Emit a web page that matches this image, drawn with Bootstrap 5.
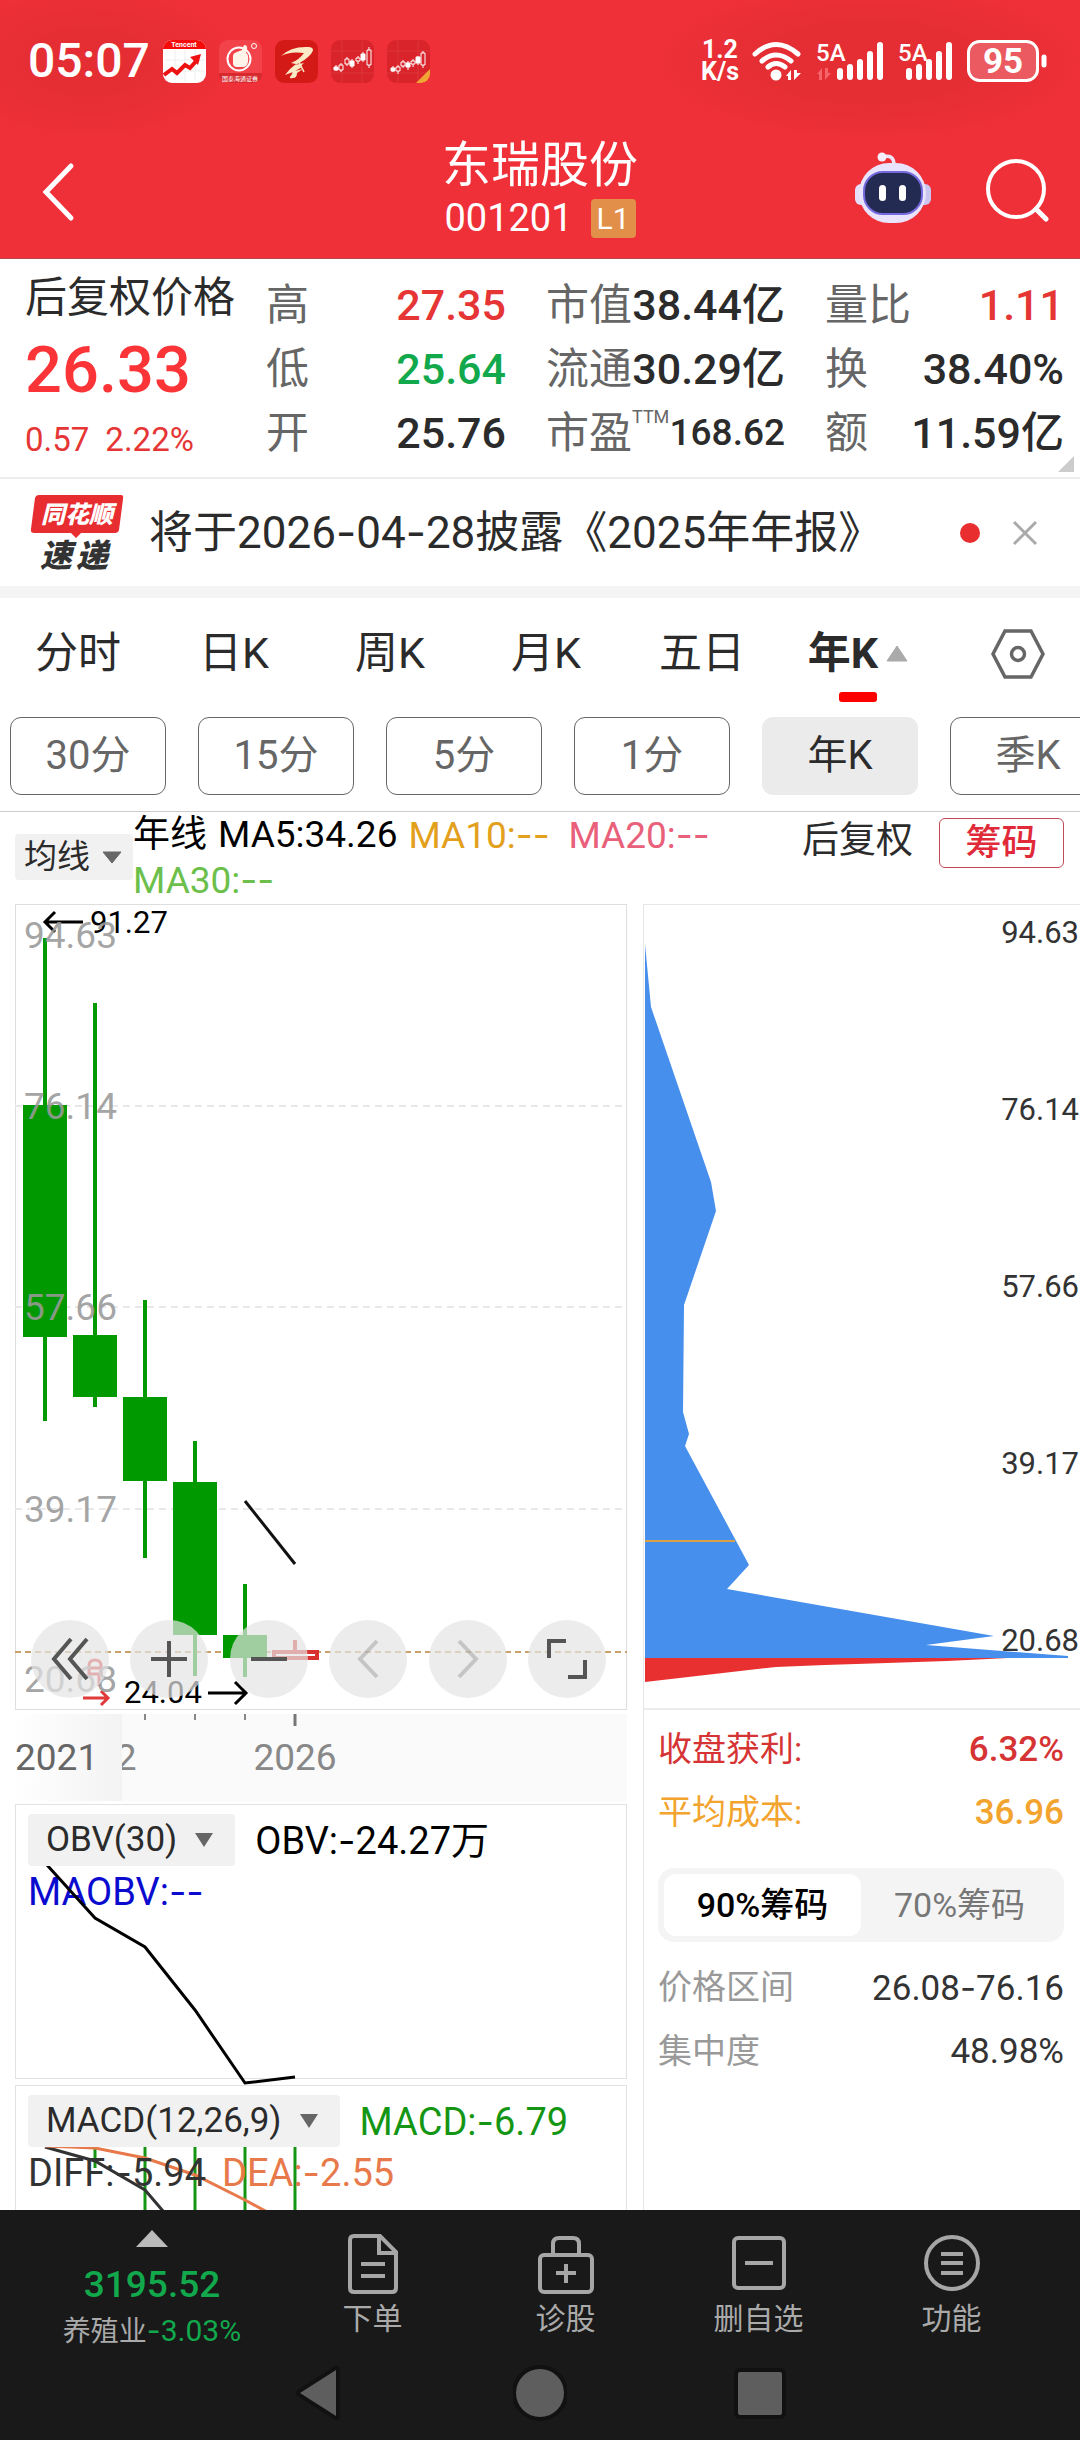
<!DOCTYPE html>
<html lang="zh-CN">
<head>
<meta charset="utf-8">
<meta name="viewport" content="width=device-width, initial-scale=1">
<title>东瑞股份 001201</title>
<link href="https://cdn.jsdelivr.net/npm/bootstrap@5.3.0/dist/css/bootstrap.min.css" rel="stylesheet">
<style>
body{font-family:Roboto,"Noto Sans CJK SC",sans-serif;color:#2b2b2b;background:#fff;line-height:1.2}
button{font-family:inherit;padding:0;border:0;background:none;color:inherit;line-height:1.2}
svg{display:block;flex:none}
svg text{font-family:Roboto,"Noto Sans CJK SC",sans-serif}
.dash{font-family:Inter,sans-serif}
.up{color:#e63535}.down{color:#12a84c}
/* top */
.topbar{background:radial-gradient(ellipse 150px 80px at 90px 62px,#e52e34 40%,transparent),radial-gradient(ellipse 220px 80px at 870px 62px,#e52e34 50%,transparent),#ef3038;color:#fff;height:259px;border-bottom:1px solid #b9484c}
.status{height:122px;padding:0 33px 0 28px}
.clock{font-size:48px;font-weight:500}
.appicons{gap:13px;margin-left:13px}
.speed{font-size:25px;line-height:22px;font-weight:700}
.netset{gap:14px;margin-left:13px}
.head{height:136px;display:grid;grid-template-columns:1fr auto 1fr;padding:0 31px}
.head .back{padding:4px 0 0 11px}
.titles{padding-top:14px}
.stockname{font-size:49px;line-height:60px}
.code{font-size:38px;line-height:44px}
.lv{background:#e28f4a;font-size:30px;line-height:39px;width:45px;border-radius:4px;margin-left:18px}
.acts{gap:54px}
/* quote */
.quote{height:220px;border-bottom:2px solid #ececec;padding:0 16px 0 25px;position:relative}
.quote .g1{width:241px;padding-top:15px}
.pname{font-size:42px;line-height:48px}
.price{font-size:65px;line-height:96px;font-weight:500;color:#fa3437}
.chg{font-size:33px;line-height:44px;gap:16px}
.gcol{padding-top:14px;font-size:43px;font-weight:500;line-height:64px;white-space:nowrap}
.gcol .lbl{color:#666;font-weight:400}
.gcol sup{font-size:18px;top:-25px}
.c2{width:240px}.c3{width:239px}.c4{width:239px}
.gsm{font-size:37px}
.corner{position:absolute;right:6px;bottom:5px}
/* news */
.news{height:107px;font-size:44px;padding:0 42px 0 31px}
.news a{margin-left:25px}
.news button{margin-left:32px}
.strip{height:12px;background:#f4f4f4}
/* tabs */
.tabs{display:grid;grid-template-columns:repeat(6,13fr) 12fr;height:111px}
.tabs button{font-size:43px;position:relative}
.tabs .gear{padding-left:20px}
.tabs .on{font-weight:700}
.tabs .on::after{content:"";position:absolute;left:50%;bottom:7px;width:38px;height:10px;margin-left:-19px;border-radius:3px;background:#fd0000}
.pills{gap:32px;padding:8px 0 16px 10px;overflow:hidden;border-bottom:1px solid #ccc}
.pills button{flex:0 0 156px;height:78px;border:1px solid #666;border-radius:11px;font-size:40px;color:#666}
.pills .on{background:#ebebeb;border-color:#ebebeb;color:#2b2b2b}
.ind{height:92px;padding:1px 16px 0 15px}
.drop{background:#f1f1f1;border-radius:4px;color:#2b2b2b;display:flex;align-items:center}
.ind .drop{height:46px;width:118px;font-size:33px;gap:12px;padding-left:9px;margin-top:21px}
.ma{font-size:37px;line-height:44px;width:610px;column-gap:11px}
.ma span.m{min-width:149px}
.fq{font-size:37px;line-height:44px;margin-top:6px}
.chip{font-size:36px;color:#e02a3a;font-weight:500;border:1px solid #c04a55;border-radius:6px;width:125px;height:50px;margin:5px 0 0 26px;line-height:40px}
/* charts */
.charts{display:grid;grid-template-columns:612fr 437fr;column-gap:16px;padding-left:15px;align-items:start}
.tools{position:absolute;left:16px;bottom:12px;right:21px;display:flex;justify-content:space-between}
.tools button{width:78px;height:78px;border-radius:50%;background:rgba(228,228,228,.7);display:flex;align-items:center;justify-content:center}
.tools button:disabled svg{opacity:.25}
.axis{margin:4px 0 3px}
.sub{border:1px solid #e2e2e2;position:relative;height:275px;margin-bottom:6px;padding:9px 12px;font-size:38px;line-height:50px}
.sub .plot{position:absolute;left:-1px;top:0;width:calc(100% + 2px);overflow:visible}
.sub .drop{position:relative;height:52px;font-size:35px;padding:0 21px 0 18px;gap:17px}
.chipcol{border-left:1px solid #e6e6e6;min-height:1310px}
.chipinfo{padding:8px 16px 0 14px;font-size:34px;line-height:63px}
.chipinfo b{font-weight:500;font-size:35px}
.chipinfo .v{font-size:35px;color:#333}
.seg{background:#f4f4f4;border-radius:16px;height:74px;padding:6px;margin:24px 0 14px}
.seg button{flex:1;border-radius:12px;color:#777;font-size:34px}
.seg .on{background:#fff;color:#000;font-weight:500}
/* bottom */
.foot{background:#191919;height:230px;color:#aaa}
.menu{display:grid;grid-template-columns:248fr repeat(4,193fr);padding:20px 32px 0 28px;height:152px}
.menu button{display:flex;flex-direction:column;align-items:center;font-size:30px;line-height:36px}
.menu .idx{font-size:37px;line-height:44px;font-weight:500;color:#12a84c;margin-top:16px}
.menu .sec{font-size:28px;line-height:34px;margin-top:6px}
.menu .sec .down{font-size:30px}
.menu .cap{margin-top:3px}
.nav3{gap:166px;height:62px}
</style>
</head>
<body>
<div class="d-flex flex-column vh-100 overflow-hidden">
<header class="topbar flex-shrink-0">
 <div class="status d-flex align-items-center">
  <span class="clock">05:07</span>
  <div class="appicons d-flex">
   <svg width="43" height="43" viewBox="0 0 43 43"><rect width="43" height="43" rx="9" fill="#fff"/><path d="M0 9a9 9 0 0 1 9-9h25a9 9 0 0 1 9 9z" fill="#f60a0a"/><path d="M12 10v30M22 10v32M32 10v30M2 20h40M2 31h40" stroke="#eee"/><text x="21" y="7" font-size="7" fill="#fff" text-anchor="middle" font-weight="700">Tencent</text><path d="M1 35l8-6 5 4 8-8 5 3 8-9" fill="none" stroke="#e11" stroke-width="4"/><path d="M27 17l11-3-3 11z" fill="#e11"/></svg>
   <svg width="43" height="43" viewBox="0 0 43 43"><rect width="43" height="43" rx="9" fill="#f2434a"/><path d="M0 33h43a9 9 0 0 1-9 10H9a9 9 0 0 1-9-10z" fill="#d62a2e"/><circle cx="20" cy="19" r="11.500" fill="none" stroke="#fff" stroke-width="2"/><path d="M14 16q0-3 4-4l5-2 2-5q4 0 3 5l-1 3q3 1 2 9-1 5-5 5h-6q-4 0-4-4z" fill="#fff4ea"/><circle cx="35" cy="6" r="2.500" fill="none" stroke="#fff"/><text x="21" y="41" font-size="6" fill="#fff" text-anchor="middle">国泰海通证券</text></svg>
   <svg width="43" height="43" viewBox="0 0 43 43"><rect width="43" height="43" rx="9" fill="#d41a17"/><path d="M6 16q10-10 28-9 7 1 2 7-6 7-16 11l9-2-9 8 8-2-6 4q0 5-4 5-4 1-3-1 1-1 3-5l-8 3q4-6 11-11l-5-1q8-3 13-10-14-2-23 3z" fill="#fbeac6"/><path d="M17 32l10-6M24 22l5 10" stroke="#fbeac6" stroke-width="1.500"/></svg>
   <svg width="43" height="43" viewBox="0 0 43 43"><rect width="43" height="43" rx="9" fill="#d8242a"/><path d="M11 0v43M31 0v43M0 11h43M0 33h43" stroke="#dc3538"/><g stroke="#fff" fill="#fff"><path d="M5 25v6M10 23v9M16 17v9M21 19v9M27 16v8M32 12v10M38 7v21"/><path d="M3 27h4v3H3zM19 21h4v5h-4zM30 14h4v6h-4z"/><path d="M8 25h4v5H8zM14 19h4v5h-4zM25 18h4v3h-4zM36 10h4v15h-4z" fill="#d8242a"/></g></svg>
   <svg width="43" height="43" viewBox="0 0 43 43"><rect width="43" height="43" rx="9" fill="#d8242a"/><path d="M11 0v43M31 0v43M0 11h43M0 33h43" stroke="#dc3538"/><g stroke="#fff" fill="#fff"><path d="M6 26v6M11 25v9M16 20v8M21 21v9M26 19v8M31 16v9M36 11v17"/><path d="M4 28h4v3H4zM19 23h4v4h-4zM29 17h4v6h-4z"/><path d="M9 27h4v4H9zM14 22h4v4h-4zM24 21h4v3h-4zM34 13h4v12h-4z" fill="#d8242a"/></g><path d="M29 43l14-14v5a9 9 0 0 1-9 9z" fill="#f1a534"/></svg>
  </div>
  <div class="speed ms-auto text-center">1.2<br>K/s</div>
  <div class="netset d-flex">
  <svg width="50" height="42" viewBox="0 0 50 42"><g fill="none" stroke="#fff" stroke-width="5" stroke-linecap="round"><path d="M3 14q21-19 43 0M10 21q14-12 29 0M16 27q8-7 17 0"/></g><circle cx="24" cy="35" r="5.500" fill="#fff"/><path d="M34 36l5-6v10h-3v-4zM42 30v10l7-7h-4v-3z" fill="#fff"/></svg>
  <svg width="68" height="42" viewBox="0 0 68 42"><text x="0" y="21" font-size="24" font-weight="500" fill="#fff">5A</text><path d="M1 34l5-6v12H3v-6zM9 28v12l6-7h-3v-5z" fill="#f4656b"/><g stroke="#fff" stroke-width="6" stroke-linecap="round"><path d="M24 31v6M34 27v10M44 22v15M54 14v23M64 5v32"/></g></svg>
  <svg width="55" height="42" viewBox="0 0 55 42"><text x="0" y="21" font-size="24" font-weight="500" fill="#fff">5A</text><g stroke="#fff" stroke-width="6" stroke-linecap="round"><path d="M11 31v6M21 27v10M31 22v15M41 14v23M51 5v32"/></g></svg>
  <svg width="80" height="42" viewBox="0 0 80 42"><rect x="1.500" y="1.500" width="69" height="39" rx="11" fill="#ea5a60" stroke="#fff" stroke-width="3"/><path d="M77 17v8" stroke="#fff" stroke-width="5" stroke-linecap="round"/><text x="36" y="33" font-size="35" font-weight="700" fill="#fff" text-anchor="middle">95</text></svg>
  </div>
 </div>
 <div class="head">
  <button class="back text-start" aria-label="返回"><svg width="34" height="60" viewBox="0 0 34 60"><path d="M29 4L4 30l25 26" fill="none" stroke="#fff" stroke-width="5" stroke-linecap="round"/></svg></button>
  <div class="titles text-center"><div class="stockname">东瑞股份</div><div class="code d-flex align-items-center justify-content-center">001201<span class="lv">L1</span></div></div>
  <div class="acts d-flex align-items-center justify-content-end">
   <button aria-label="智能助手"><svg width="76" height="76" viewBox="0 0 76 76"><path d="M28 5q11-3 11 8" fill="none" stroke="#efe6f7" stroke-width="3.500"/><circle cx="27" cy="5" r="4.500" fill="#f6eefa"/><rect x="0" y="32" width="14" height="21" rx="6" fill="#e4defa"/><rect x="62" y="32" width="14" height="21" rx="6" fill="#c9c5ef"/><rect x="4" y="11" width="67" height="60" rx="30" fill="#e9e4fb"/><rect x="9" y="20" width="58" height="42" rx="19" fill="#232b52" stroke="#7468dd" stroke-width="2"/><rect x="24" y="33" width="7" height="16" rx="3.500" fill="#fff"/><rect x="44" y="33" width="7" height="16" rx="3.500" fill="#fff"/></svg></button>
   <button aria-label="搜索"><svg width="64" height="64" viewBox="0 0 64 64"><circle cx="31" cy="31" r="28" fill="none" stroke="#fff" stroke-width="4"/><path d="M51 51l10 10" stroke="#fff" stroke-width="5" stroke-linecap="round"/></svg></button>
  </div>
 </div>
</header>

<section class="quote d-flex flex-shrink-0">
 <div class="g1 text-nowrap"><div class="pname">后复权价格</div><div class="price">26.33</div><div class="chg up d-flex"><span>0.57</span><span>2.22%</span></div></div>
 <div class="gcol c2">
  <div class="d-flex justify-content-between"><span class="lbl">高</span><span class="up">27.35</span></div>
  <div class="d-flex justify-content-between"><span class="lbl">低</span><span class="down">25.64</span></div>
  <div class="d-flex justify-content-between"><span class="lbl">开</span><span>25.76</span></div>
 </div>
 <div class="gcol c3 ms-auto">
  <div class="d-flex justify-content-between"><span class="lbl">市值</span><span>38.44亿</span></div>
  <div class="d-flex justify-content-between"><span class="lbl">流通</span><span>30.29亿</span></div>
  <div class="d-flex justify-content-between"><span class="lbl">市盈<sup>TTM</sup></span><span class="gsm">168.62</span></div>
 </div>
 <div class="gcol c4 ms-auto">
  <div class="d-flex justify-content-between"><span class="lbl">量比</span><span class="up">1.11</span></div>
  <div class="d-flex justify-content-between"><span class="lbl">换</span><span>38.40%</span></div>
  <div class="d-flex justify-content-between"><span class="lbl">额</span><span>11.59亿</span></div>
 </div>
 <svg class="corner" width="16" height="16" viewBox="0 0 16 16"><path d="M16 0v16H0z" fill="#ccc"/></svg>
</section>

<section class="news d-flex align-items-center flex-shrink-0 text-nowrap">
 <svg width="93" height="76" viewBox="0 0 93 76"><path d="M8 0h82q3 0 2 4l-4 31q-1 3-4 3H50l-5 5-5-5H3q-4 0-3-4L4 3q1-3 4-3z" fill="#e72d2f"/><text x="10" y="28" font-size="24" font-weight="900" font-style="italic" fill="#fff">同花顺</text><text x="9 45" y="72" font-size="32" font-weight="900" font-style="italic" fill="#333">速递</text></svg>
 <a href="#" class="text-reset text-decoration-none">将于2026<span class="dash">-</span>04<span class="dash">-</span>28披露《2025年年报》</a>
 <svg class="ms-auto" width="20" height="20"><circle cx="10" cy="10" r="10" fill="#e82e2e"/></svg>
 <button aria-label="关闭"><svg width="26" height="26" viewBox="0 0 26 26"><path d="M2 2l22 22M24 2L2 24" stroke="#aaa" stroke-width="3"/></svg></button>
</section>
<div class="strip flex-shrink-0"></div>

<nav class="tabs flex-shrink-0">
 <button>分时</button><button>日K</button><button>周K</button><button>月K</button><button>五日</button>
 <button class="on d-flex align-items-center justify-content-center gap-2">年K<svg width="22" height="17" viewBox="0 0 22 17"><path d="M11 1L21 16H1z" fill="#aaa" stroke="#aaa" stroke-linejoin="round"/></svg></button>
 <button class="gear d-flex align-items-center justify-content-center" aria-label="设置"><svg width="54" height="50" viewBox="0 0 54 50"><path d="M14 2h26l12 23-12 23H14L2 25z" fill="none" stroke="#666" stroke-width="3.500"/><circle cx="27" cy="25" r="6.500" fill="none" stroke="#666" stroke-width="3.500"/></svg></button>
</nav>
<div class="pills d-flex flex-shrink-0">
 <button>30分</button><button>15分</button><button>5分</button><button>1分</button><button class="on">年K</button><button>季K</button>
</div>

<main class="flex-fill overflow-hidden" style="min-height:0">
 <div class="ind d-flex align-items-start text-nowrap">
  <button class="drop">均线<svg width="20" height="13" viewBox="0 0 20 13"><path d="M1 1h18l-9 11z" fill="#666" stroke="#666" stroke-linejoin="round"/></svg></button>
  <div class="ma d-flex flex-wrap text-black"><span>年线</span><span>MA5:34.26</span><span class="m" style="color:#e3a01c">MA10:<span class="dash">--</span></span><span class="m" style="color:#e9607a">MA20:<span class="dash">--</span></span><span class="m" style="color:#6cbf4b">MA30:<span class="dash">--</span></span></div>
  <span class="fq ms-auto">后复权</span>
  <button class="chip">筹码</button>
 </div>
 <div class="charts">
  <div>
   <div class="position-relative">
    <svg class="w-100 h-auto" viewBox="0 0 612 806">
     <rect x=".5" y=".5" width="611" height="805" fill="none" stroke="#dedede"/>
     <path d="M0 202H612M0 403H612M0 605H612" stroke="#e8e8e8" stroke-width="2" stroke-dasharray="7 5"/>
     <path d="M0 748H612" stroke="#c9a06a" stroke-width="2" stroke-dasharray="6 4"/>
     <g stroke="#009a00" stroke-width="4"><path d="M30 34V517M80 99V503M130 396V654M180 537V772M230 680V773"/></g>
     <g fill="#009a00"><path d="M8 201h44v232H8zM58 431h44v62H58zM108 493h44v84h-44zM158 578h44v153h-44zM208 731h44v23h-44z"/></g>
     <path d="M280 736v10" stroke="#d93030" stroke-width="4"/><rect x="259" y="748" width="43" height="6" fill="#fff" stroke="#d93030" stroke-width="4"/>
     <path d="M230 597L280 660" stroke="#111" stroke-width="3"/>
     <g fill="none" stroke="#000" stroke-width="3"><path d="M68 18H30M40 8L30 18l10 10M193 789h37M220 778l11 11-11 11"/></g>
     <g font-size="31"><text x="75" y="29">91.27</text><text x="109" y="799">24.04</text></g>
     <g fill="none" stroke="#e03a3a" stroke-width="3"><path d="M68 794h24M86 787l7 7-7 7M84 770v12M74 762q0-6 6-6t6 6v8H74zM74 764h12"/></g>
     <g font-size="37" fill="#999" fill-opacity=".9"><text x="9" y="44">94.63</text><text x="9" y="215">76.14</text><text x="9" y="416">57.66</text><text x="9" y="618">39.17</text><text x="9" y="788">20.68</text></g>
    </svg>
    <div class="tools">
     <button aria-label="最早"><svg width="40" height="46" viewBox="0 0 40 46" fill="none" stroke="#555" stroke-width="4"><path d="M21 3L4 23l17 20M37 3L20 23l17 20"/></svg></button>
     <button aria-label="放大"><svg width="38" height="38" viewBox="0 0 38 38" stroke="#555" stroke-width="4"><path d="M19 1v36M1 19h36"/></svg></button>
     <button aria-label="缩小"><svg width="38" height="38" viewBox="0 0 38 38" stroke="#555" stroke-width="4"><path d="M1 19h36"/></svg></button>
     <button disabled aria-label="左移"><svg width="24" height="42" viewBox="0 0 24 42" fill="none" stroke="#555" stroke-width="4"><path d="M21 3L4 21l17 18"/></svg></button>
     <button disabled aria-label="右移"><svg width="24" height="42" viewBox="0 0 24 42" fill="none" stroke="#555" stroke-width="4"><path d="M3 3l17 18L3 39"/></svg></button>
     <button aria-label="全屏"><svg width="42" height="42" viewBox="0 0 42 42" fill="none" stroke="#555" stroke-width="4"><path d="M3 20V3h17M22 39h17V22"/></svg></button>
    </div>
   </div>
   <svg class="axis w-100 h-auto" viewBox="0 0 612 87">
    <defs><linearGradient id="fade"><stop offset="0" stop-color="#fff"/><stop offset="1" stop-color="#f3f3f3"/></linearGradient></defs>
    <path d="M0 0h612v87H0z" fill="#fafafa"/><path d="M130 0v6M180 0v6M230 0v6" stroke="#888" stroke-width="2"/><path d="M280 0v12" stroke="#777" stroke-width="3"/>
    <g font-size="37" fill="#888"><text x="80" y="56" text-anchor="middle">2022</text><text x="280" y="56" text-anchor="middle">2026</text></g>
    <path d="M0 0h107v87H0z" fill="url(#fade)"/><text x="0" y="56" font-size="37" fill="#666">2021</text>
   </svg>
   <div class="sub text-nowrap">
    <svg class="plot" viewBox="0 0 612 275"><path d="M32 60L80 113l50 29 50 63 50 73 50-6" fill="none" stroke="#000" stroke-width="3"/></svg>
    <div class="d-flex align-items-center text-black"><button class="drop">OBV(30)<svg width="20" height="16" viewBox="0 0 20 16"><path d="M1 1h18l-9 14z" fill="#666"/></svg></button><span class="ms-3 ps-1">OBV:<span class="dash">-</span>24.27万</span></div>
    <div style="color:#0b0bd0">MAOBV:<span class="dash">--</span></div>
   </div>
   <div class="sub text-nowrap">
    <svg class="plot" viewBox="0 0 612 275" fill="none"><path d="M80 60v22M130 60v215M180 60v215M230 60v215M280 60v215" stroke="#149614" stroke-width="3"/><path d="M30 61l50 14 50 29 18 21 32 60" stroke="#333" stroke-width="3"/><path d="M30 60l50 2 50 10 50 17 50 25 50 27" stroke="#e8794a" stroke-width="3"/></svg>
    <div class="d-flex align-items-center"><button class="drop">MACD(12,26,9)<svg width="20" height="16" viewBox="0 0 20 16"><path d="M1 1h18l-9 14z" fill="#666"/></svg></button><span class="ms-3 ps-1" style="color:#149614">MACD:<span class="dash">-</span>6.79</span></div>
    <div class="d-flex gap-3 position-relative"><span style="color:#333">DIFF:<span class="dash">-</span>5.94</span><span style="color:#e8794a">DEA:<span class="dash">-</span>2.55</span></div>
   </div>
  </div>
  <div class="chipcol">
   <svg class="w-100 h-auto" viewBox="0 0 436 806">
    <path d="M0 .5H436" stroke="#e6e6e6"/><path d="M0 805H436" stroke="#ececec" stroke-width="2"/>
    <path d="M1 40L7 103 67 278l5 29-32 94-1 107 6 22-4 12 64 119-22 24 267 47-68 9 142 11v2H1z" fill="#468fec"/>
    <path d="M1 637H91" stroke="#d9a04a" stroke-width="2"/>
    <path d="M1 754H364l-61 3-60 2-62 2-49 2L1 778z" fill="#e83030"/>
    <g font-size="31" fill="#333" text-anchor="end"><text x="435" y="39">94.63</text><text x="435" y="216">76.14</text><text x="435" y="393">57.66</text><text x="435" y="570">39.17</text><text x="435" y="747">20.68</text></g>
   </svg>
   <div class="chipinfo">
    <div class="d-flex justify-content-between" style="color:#d63434"><span>收盘获利:</span><b>6.32%</b></div>
    <div class="d-flex justify-content-between" style="color:#f2a42e"><span>平均成本:</span><b>36.96</b></div>
    <div class="seg d-flex"><button class="on">90%筹码</button><button>70%筹码</button></div>
    <div class="d-flex justify-content-between"><span style="color:#999">价格区间</span><span class="v">26.08<span class="dash">-</span>76.16</span></div>
    <div class="d-flex justify-content-between"><span style="color:#999">集中度</span><span class="v">48.98%</span></div>
   </div>
  </div>
 </div>
</main>

<footer class="foot flex-shrink-0">
 <div class="menu">
  <button><svg width="32" height="17" viewBox="0 0 32 17"><path d="M16 0l16 17H0z" fill="#bbb"/></svg><span class="idx">3195.52</span><span class="sec">养殖业<span class="down"><span class="dash">-</span>3.03%</span></span></button>
  <button><svg width="64" height="68" viewBox="0 0 64 68" fill="none" stroke="#a6a6a6" stroke-width="4"><path d="M13 6h26l16 16v36q0 4-4 4H13q-4 0-4-4V10q0-4 4-4zM38 6v17h17M20 34h24M20 46h24"/></svg><span class="cap">下单</span></button>
  <button><svg width="64" height="68" viewBox="0 0 64 68" fill="none" stroke="#a6a6a6" stroke-width="4"><rect x="6" y="25" width="52" height="37" rx="4"/><path d="M19 25V14q0-6 6-6h14q6 0 6 6v11M32 34v19M22 43h20"/></svg><span class="cap">诊股</span></button>
  <button><svg width="64" height="68" viewBox="0 0 64 68" fill="none" stroke="#a6a6a6" stroke-width="4"><rect x="7" y="8" width="50" height="50" rx="4"/><path d="M18 33h28"/></svg><span class="cap">删自选</span></button>
  <button><svg width="64" height="68" viewBox="0 0 64 68" fill="none" stroke="#a6a6a6" stroke-width="4"><circle cx="32" cy="33" r="26"/><path d="M21 24h22M21 33h22M21 43h22"/></svg><span class="cap">功能</span></button>
 </div>
 <div class="nav3 d-flex justify-content-center align-items-center">
  <button aria-label="后退"><svg width="54" height="62" viewBox="0 0 54 62"><path d="M7 31L43 8v46z" fill="#5e5e5e" stroke="#111" stroke-width="8" stroke-linejoin="round" paint-order="stroke"/></svg></button>
  <button aria-label="主页"><svg width="54" height="62" viewBox="0 0 54 62"><circle cx="27" cy="31" r="24" fill="#5e5e5e" stroke="#111" stroke-width="8" paint-order="stroke"/></svg></button>
  <button aria-label="最近任务"><svg width="54" height="62" viewBox="0 0 54 62"><rect x="5" y="10" width="44" height="43" rx="2" fill="#5e5e5e" stroke="#111" stroke-width="8" paint-order="stroke"/></svg></button>
 </div>
</footer>
</div>
<script src="https://cdn.jsdelivr.net/npm/bootstrap@5.3.0/dist/js/bootstrap.bundle.min.js"></script>
</body>
</html>
